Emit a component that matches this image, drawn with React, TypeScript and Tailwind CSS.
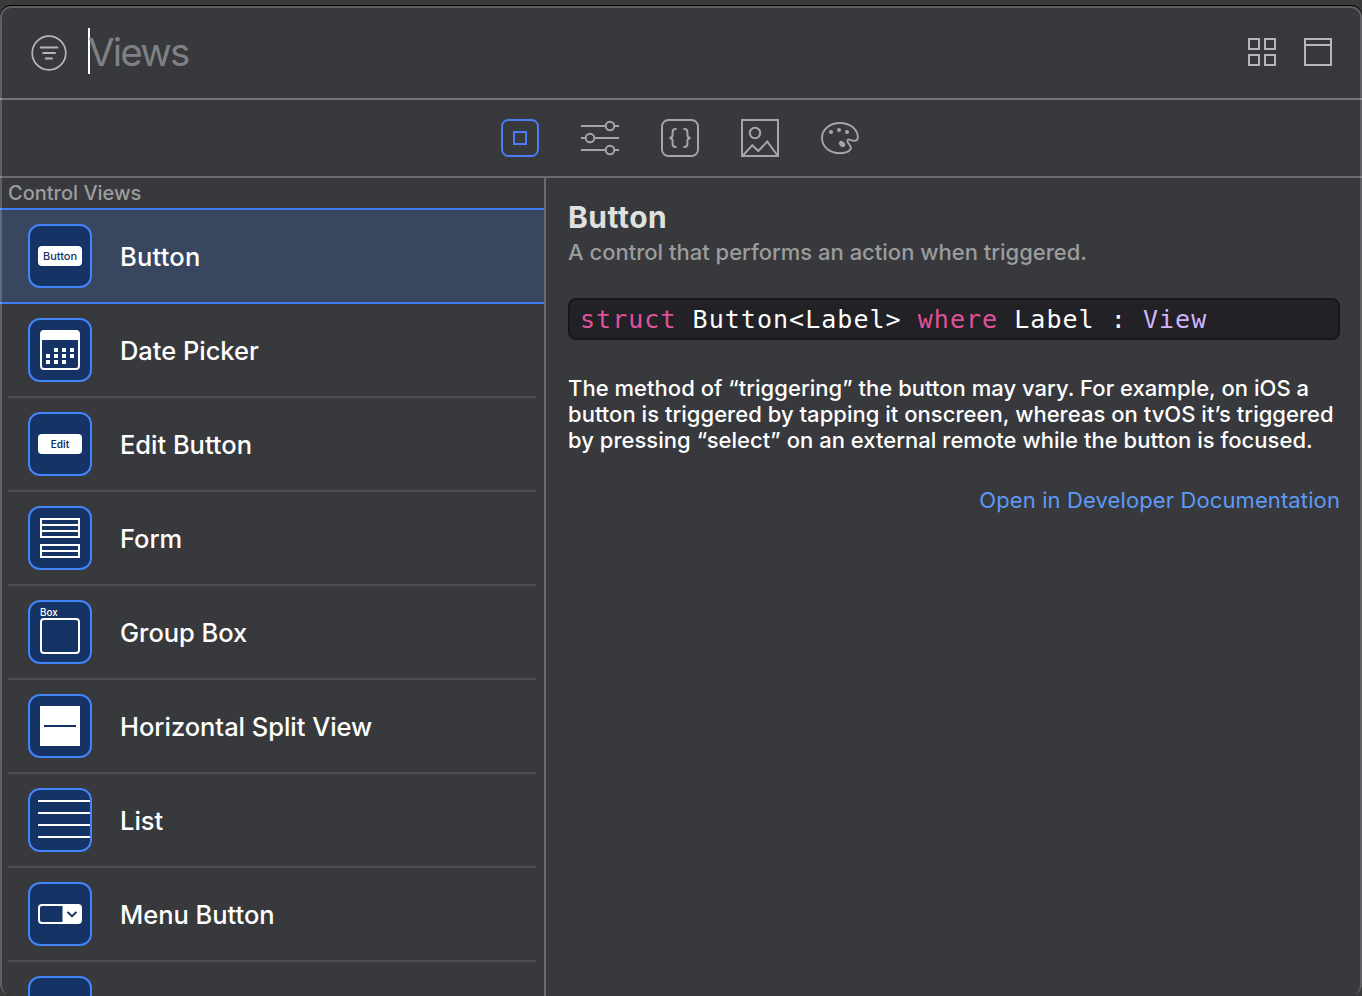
import type { ReactNode } from "react";

function FilterIcon() {
  return (
    <svg className="mt-[2px]" width="36" height="36" viewBox="0 0 36 36" fill="none" stroke="#b5b7b9" strokeLinecap="round">
      <circle cx="18" cy="18" r="16.8" strokeWidth="1.7" />
      <path d="M9.7 12.4H26.3M12.2 18H24M14.8 23.6H21" strokeWidth="2" />
    </svg>
  );
}

function GridIcon() {
  return (
    <svg width="28" height="28" viewBox="0 0 28 28" fill="none" stroke="#b5b7b9" strokeWidth="2">
      <path d="M1 1h10v10H1zM17 1h10v10H17zM1 17h10v10H1zM17 17h10v10H17z" />
    </svg>
  );
}

function WindowIcon() {
  return (
    <svg width="28" height="28" viewBox="0 0 28 28" fill="none" stroke="#b5b7b9" strokeWidth="2">
      <path d="M1 1h26v26H1zM1 7h26" />
    </svg>
  );
}

function TabIcon({ color = "#a5a6a8", children }: { color?: string; children: ReactNode }) {
  return (
    <svg width="38" height="38" viewBox="0 0 38 38" fill="none" stroke={color} strokeWidth="2">
      {children}
    </svg>
  );
}

function Tabs() {
  return (
    <nav className="flex h-[76px] items-center justify-center gap-[42px] pr-[2px]">
      <TabIcon color="#4a7df5">
        <rect x="1" y="1" width="36" height="36" rx="6.5" />
        <rect x="13" y="13" width="12" height="12" />
      </TabIcon>
      <TabIcon>
        <path d="M0 7H24.6M33.4 7H38M0 19H4.6M13.4 19H38M0 31H24.6M33.4 31H38" />
        <circle cx="29" cy="7" r="4.3" />
        <circle cx="9" cy="19" r="4.3" />
        <circle cx="29" cy="31" r="4.3" />
      </TabIcon>
      <TabIcon>
        <rect x="1" y="1" width="36" height="36" rx="6.5" />
        <path d="M15.6 10H14.6Q11.6 10 11.6 13V16Q11.6 19 8.4 19Q11.6 19 11.6 22V25Q11.6 28 14.6 28H15.6M22.4 10H23.4Q26.4 10 26.4 13V16Q26.4 19 29.6 19Q26.4 19 26.4 22V25Q26.4 28 23.4 28H22.4" />
      </TabIcon>
      <TabIcon>
        <path d="M1 1h36v36H1z" />
        <circle cx="14" cy="14" r="5.2" />
        <path d="M2 36.5L11.3 26.2L17.3 32L26.3 22.5L36.5 36.5" />
      </TabIcon>
      <TabIcon>
        <path d="M19 4C9 4 1 10.4 1 19C1 28 9 34.2 19 34.2C25.5 34.2 29.8 32 29.8 28.8C29.8 25.8 26.4 24.4 26.4 22C26.4 20.6 27.5 20.3 29 20.8C31 21.5 33.6 22.2 35.2 21.4C36.6 20.6 37 19 36.8 17C36 9.5 28.5 4 19 4Z" strokeWidth="1.9" />
        <g fill="#a5a6a8" stroke="none">
          <circle cx="10" cy="13" r="2.1" />
          <circle cx="18" cy="11" r="2.1" />
          <circle cx="26" cy="13" r="2.1" />
          <ellipse cx="21" cy="25" rx="3.5" ry="2.5" transform="rotate(40 21 25)" />
        </g>
      </TabIcon>
    </nav>
  );
}

function Tile({ children }: { children?: ReactNode }) {
  return (
    <div className="flex h-16 w-16 shrink-0 items-center justify-center overflow-hidden rounded-[12px] border-2 border-[#4285fb] bg-[#153365]">
      {children}
    </div>
  );
}

function Glyph({ children }: { children: ReactNode }) {
  return (
    <svg className="shrink-0" width="60" height="60" viewBox="2 2 60 60" fill="none" stroke="#fff" strokeWidth="2">
      {children}
    </svg>
  );
}

const items: { name: string; icon: ReactNode }[] = [
  {
    name: "Button",
    icon: (
      <span className="flex h-5 w-11 items-center justify-center rounded-[4px] bg-white text-[11px] leading-5 font-medium text-[#153365]">
        Button
      </span>
    ),
  },
  {
    name: "Date Picker",
    icon: (
      <Glyph>
        <rect x="13" y="13" width="38" height="38" rx="3" />
        <path d="M13 14h38v8H13z" fill="#fff" stroke="none" />
        <path d="M26 32h4M34 32h4M42 32h4M18 38h4M26 38h4M34 38h4M42 38h4M18 44h4M26 44h4M34 44h4" strokeWidth="4" />
      </Glyph>
    ),
  },
  {
    name: "Edit Button",
    icon: (
      <span className="flex h-5 w-11 items-center justify-center rounded-[4px] bg-white pt-px text-[10px] font-semibold text-[#153365]">
        Edit
      </span>
    ),
  },
  {
    name: "Form",
    icon: (
      <Glyph>
        <path d="M13 13h38v18H13zM13 19h38M13 25h38M13 39h38v12H13zM13 45h38" />
      </Glyph>
    ),
  },
  {
    name: "Group Box",
    icon: (
      <div className="flex w-10 flex-col pb-1 text-[9.8px] leading-[14px] font-medium text-white">
        Box
        <div className="-mt-[2px] h-9 rounded-[4px] border-2 border-white" />
      </div>
    ),
  },
  {
    name: "Horizontal Split View",
    icon: (
      <div className="flex h-10 w-10 items-center justify-center bg-white">
        <div className="h-0.5 w-8 bg-[#153365]" />
      </div>
    ),
  },
  {
    name: "List",
    icon: (
      <Glyph>
        <path d="M10 13h52M10 25h52M10 37h52M10 49h52" />
      </Glyph>
    ),
  },
  {
    name: "Menu Button",
    icon: (
      <Glyph>
        <rect x="11" y="23" width="42" height="18" rx="3" />
        <path d="M34.5 23H52V41H34.5z" fill="#fff" stroke="none" />
        <path d="M39.5 30L44 34.2L48.5 30" stroke="#153365" />
      </Glyph>
    ),
  },
];

function Sidebar() {
  return (
    <aside className="flex w-[546px] shrink-0 flex-col overflow-hidden border-r-2 border-[#6a6b6e]">
      <h2 className="h-[30px] shrink-0 pl-2 text-[20px] leading-[30px] font-medium text-[#9c9d9f]">Control Views</h2>
      <div className="flex h-24 shrink-0 items-center gap-7 border-y-2 border-[#3f7cf6] bg-[#384660] pl-7">
        <Tile>{items[0].icon}</Tile>
        <span className="pt-[2px] text-[25.5px] font-[450] tracking-[0.2px] text-white">{items[0].name}</span>
      </div>
      {items.slice(1).map((item) => (
        <div key={item.name} className="mx-2 flex h-[94px] shrink-0 items-center gap-7 border-b-2 border-[#4b4d50] pl-5">
          <Tile>{item.icon}</Tile>
          <span className="pt-[2px] text-[25.5px] font-[450] tracking-[-0.03px] text-white">{item.name}</span>
        </div>
      ))}
      <div className="mx-2 flex h-[92px] shrink-0 items-center pl-5">
        <Tile />
      </div>
    </aside>
  );
}

function Detail() {
  return (
    <main className="flex flex-1 flex-col pr-[22px] pl-[22px]">
      <h1 className="mt-[21px] h-9 text-[30px] leading-9 font-bold tracking-[0.5px] text-[#dfe0e0]">Button</h1>
      <p className="mt-[3px] h-7 text-[22px] leading-7 font-[450] whitespace-nowrap text-[#9b9c9e]">
        A control that performs an action when triggered.
      </p>
      <pre className="mt-8 flex h-[42px] items-center rounded-[8px] border-2 border-[#18181c] bg-[#212126] pt-[2px] pl-[10px] text-[25px] tracking-[1.03px] text-white">
        <code className="font-['DejaVu_Sans_Mono',monospace]">
          <span className="text-[#e0529c]">struct</span> Button&lt;Label&gt; <span className="text-[#e0529c]">where</span> Label : <span className="text-[#d0b3fb]">View</span>
        </code>
      </pre>
      <p className="mt-[35px] text-[22px] leading-[26px] font-[450] tracking-[0.03px] whitespace-nowrap text-white">
        <span className="block">The method of “triggering” the button may vary. For example, on iOS a</span>
        <span className="block">button is triggered by tapping it onscreen, whereas on tvOS it’s triggered</span>
        <span className="block">by pressing “select” on an external remote while the button is focused.</span>
      </p>
      <a className="mt-[33px] self-end text-[22px] leading-7 font-normal tracking-[0.11px] whitespace-nowrap text-[#5e9af5]">
        Open in Developer Documentation
      </a>
    </main>
  );
}

export default function App() {
  return (
    <div className="h-[996px] w-[1362px] overflow-hidden bg-[#3a3a3a] pt-[5px] font-['Inter',sans-serif]">
      <div className="h-[991px] rounded-[11px] bg-black pt-px">
        <div className="relative flex h-[990px] flex-col overflow-hidden rounded-[11px] bg-[#38393c]">
          <header className="flex h-[94px] shrink-0 items-center border-b-2 border-[#75777a] pr-[30px] pl-[31px]">
            <FilterIcon />
            <div className="mb-[2px] ml-[21px] h-[46px] w-0.5 bg-white" />
            <span className="-ml-[2px] flex-1 text-[38.5px] leading-[46px] font-normal tracking-[-1.8px] text-[#7f8184]">Views</span>
            <div className="flex gap-7">
              <GridIcon />
              <WindowIcon />
            </div>
          </header>
          <Tabs />
          <div className="flex min-h-0 flex-1 border-t-2 border-[#6a6b6e]">
            <Sidebar />
            <Detail />
          </div>
          <div className="pointer-events-none absolute inset-0 rounded-[11px] border-x-2 border-t-2 border-b-0 border-white/20" />
        </div>
      </div>
    </div>
  );
}
